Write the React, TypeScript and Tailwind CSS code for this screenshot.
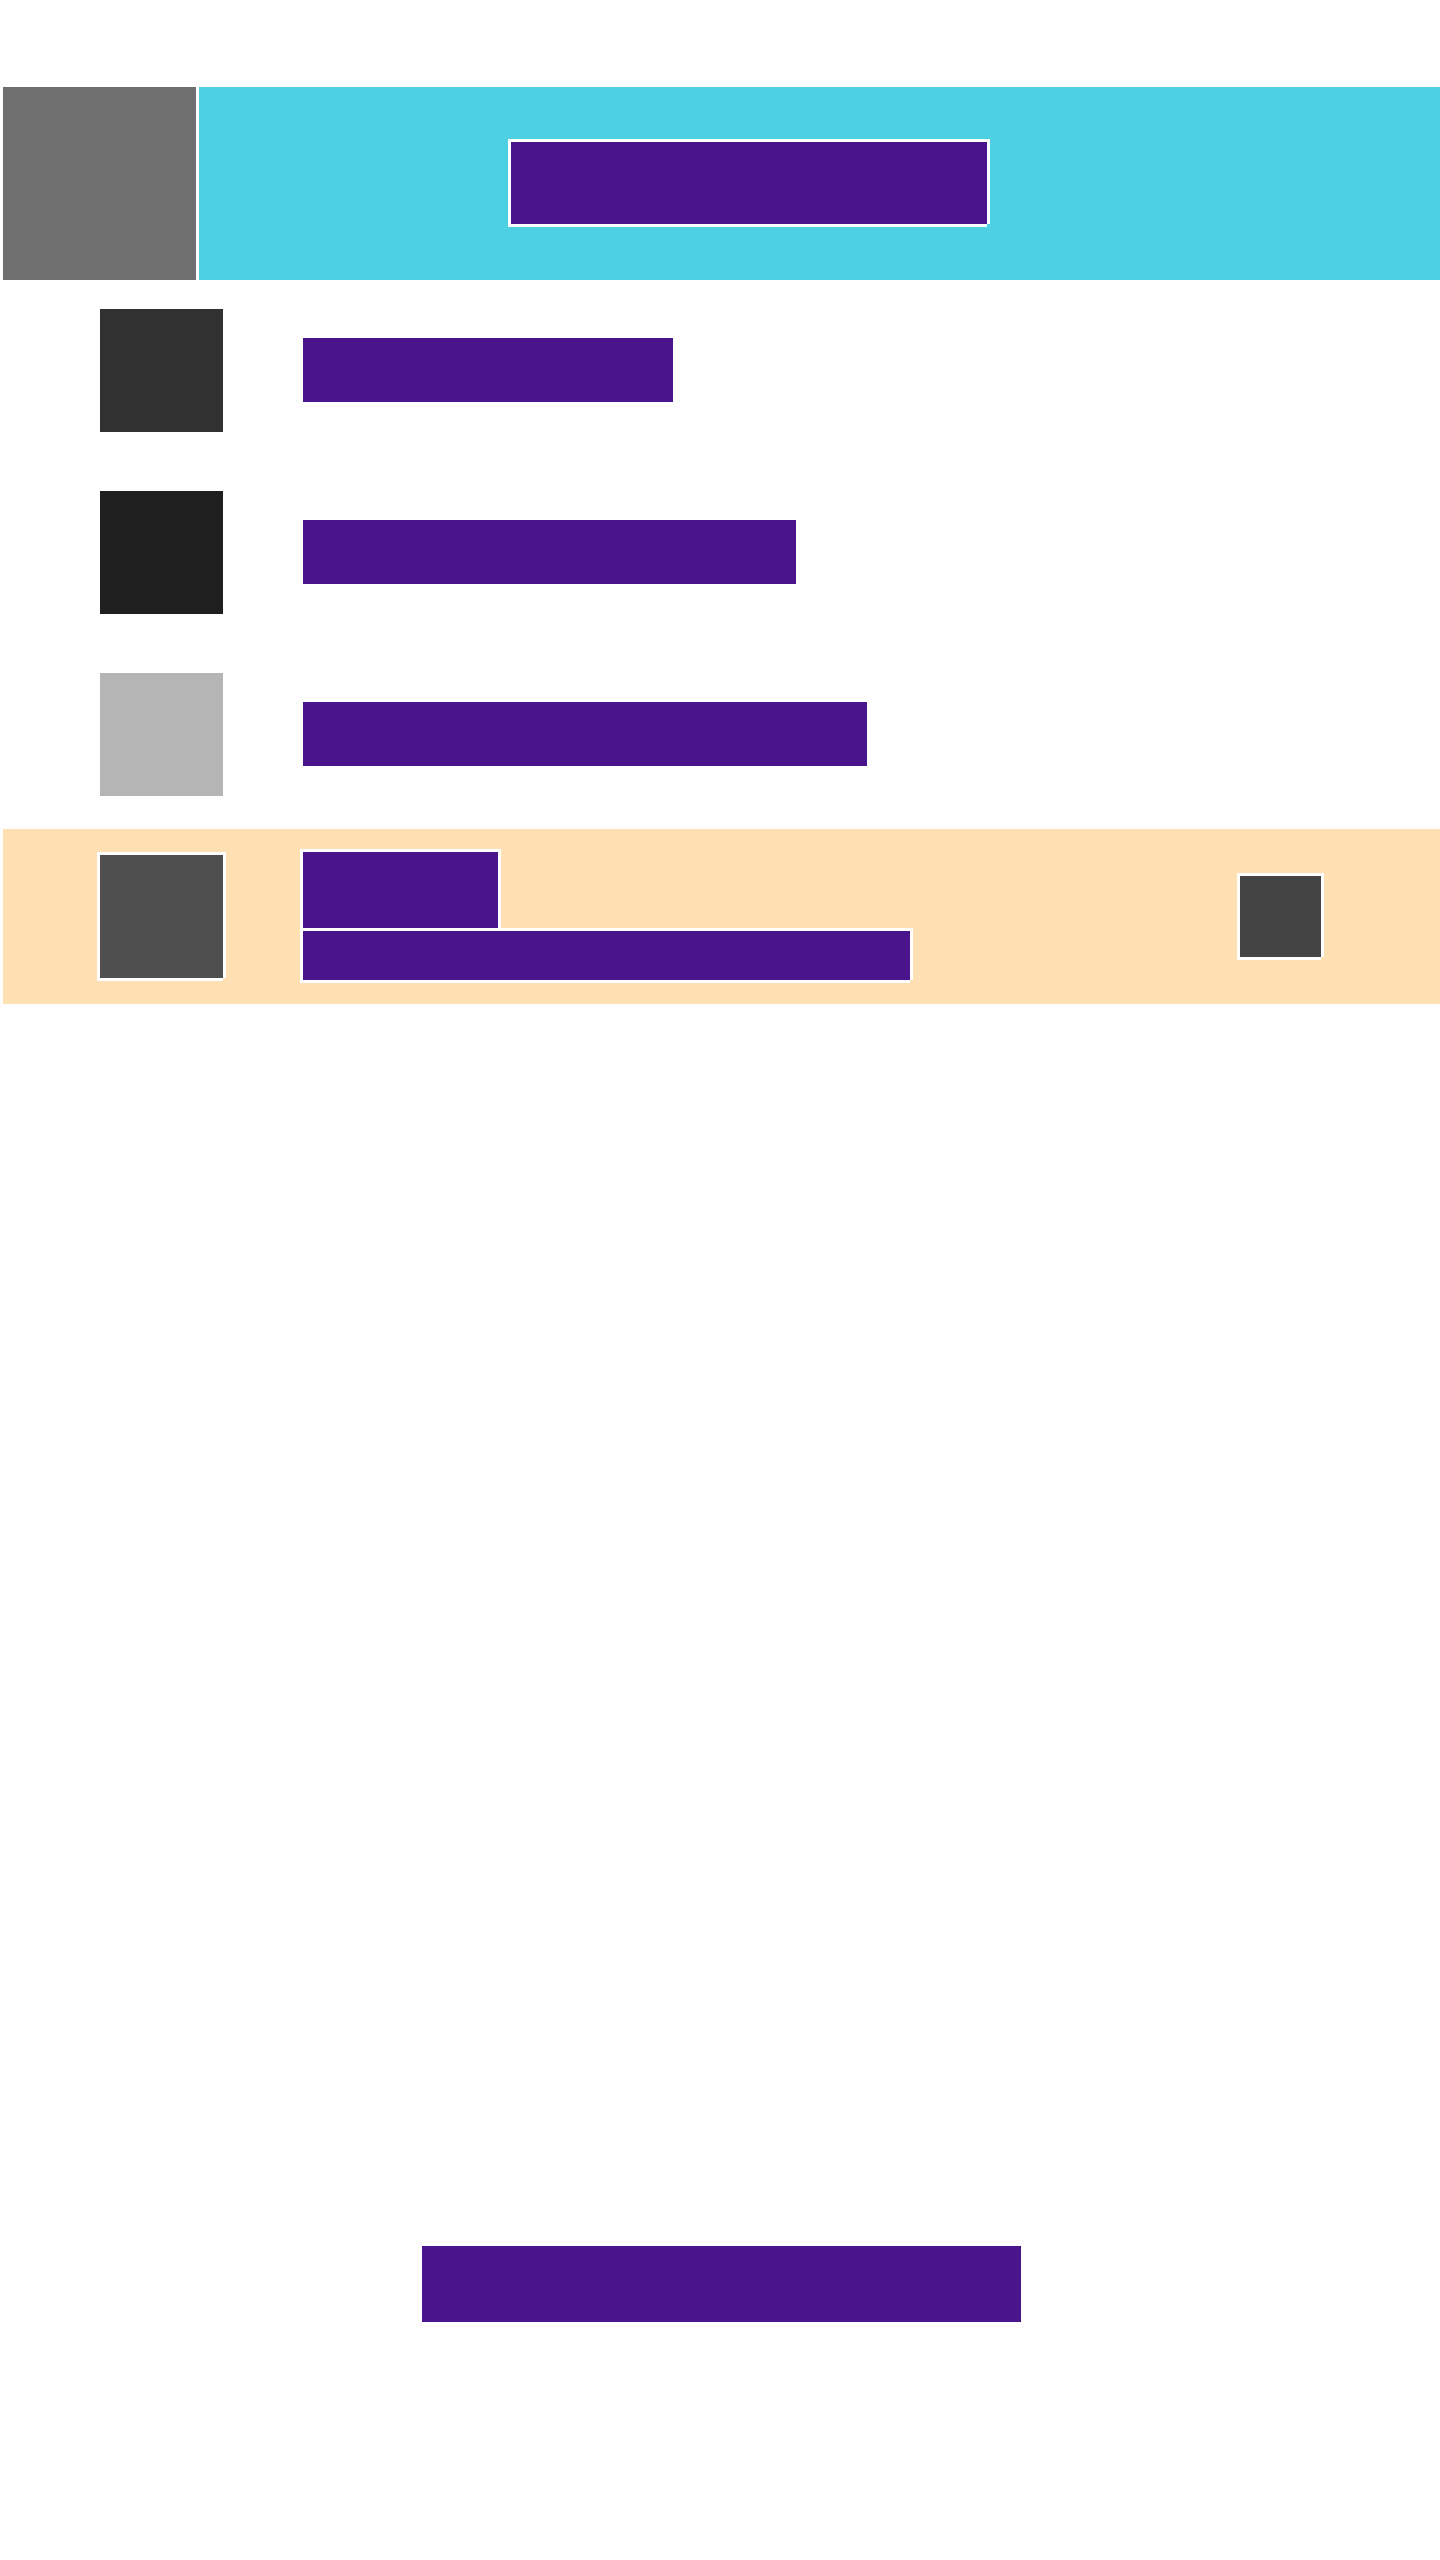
const outlined = 'shadow-[-3px_-3px_0_#fff,3px_-3px_0_#fff,-3px_3px_0_#fff,3px_0_0_#fff,0_3px_0_#fff]'

const rows = [
  { id: 'one', thumb: 'bg-[#313131]', bar: 'w-[370px]' },
  { id: 'two', thumb: 'bg-[#1f1f1f]', bar: 'w-[493px]' },
  { id: 'three', thumb: 'bg-[#b5b5b5]', bar: 'w-[564px]' },
]

export default function App() {
  return (
    <div className="h-[2560px] bg-[#fefefe] pt-[87px] pl-[3px]">
      {/* Header */}
      <header className="flex h-[193px] gap-[3px]">
        <div className="w-[193px] bg-[#6f6f6f]" />
        <div className="flex-1 bg-[#4dd0e1] pt-[55px] pl-[312px]">
          <div className={`h-[82px] w-[476px] bg-[#4a148c] ${outlined}`} />
        </div>
      </header>

      {/* List */}
      <ul className="mt-[29px] flex flex-col gap-[59px]">
        {rows.map((row) => (
          <li key={row.id} className="flex items-start gap-[80px] pl-[97px]">
            <div className={`size-[123px] ${row.thumb}`} />
            <div className={`mt-[29px] h-[64px] bg-[#4a148c] ${row.bar}`} />
          </li>
        ))}
      </ul>

      {/* Selected row */}
      <div className="mt-[33px] flex h-[175px] items-start bg-[#ffe0b2] pt-[23px] pl-[97px]">
        <div className={`mt-[3px] size-[123px] bg-[#4f4f4f] ${outlined}`} />
        <div className="ml-[80px] flex flex-col gap-[3px]">
          <div className={`h-[76px] w-[195px] bg-[#4a148c] ${outlined}`} />
          <div className={`h-[49px] w-[607px] bg-[#4a148c] ${outlined}`} />
        </div>
        <div className={`mt-[24px] mr-[119px] ml-auto size-[81px] bg-[#444444] ${outlined}`} />
      </div>

      {/* Bottom action */}
      <div className="mx-auto mt-[1242px] h-[76px] w-[599px] bg-[#4a148c]" />
    </div>
  )
}
